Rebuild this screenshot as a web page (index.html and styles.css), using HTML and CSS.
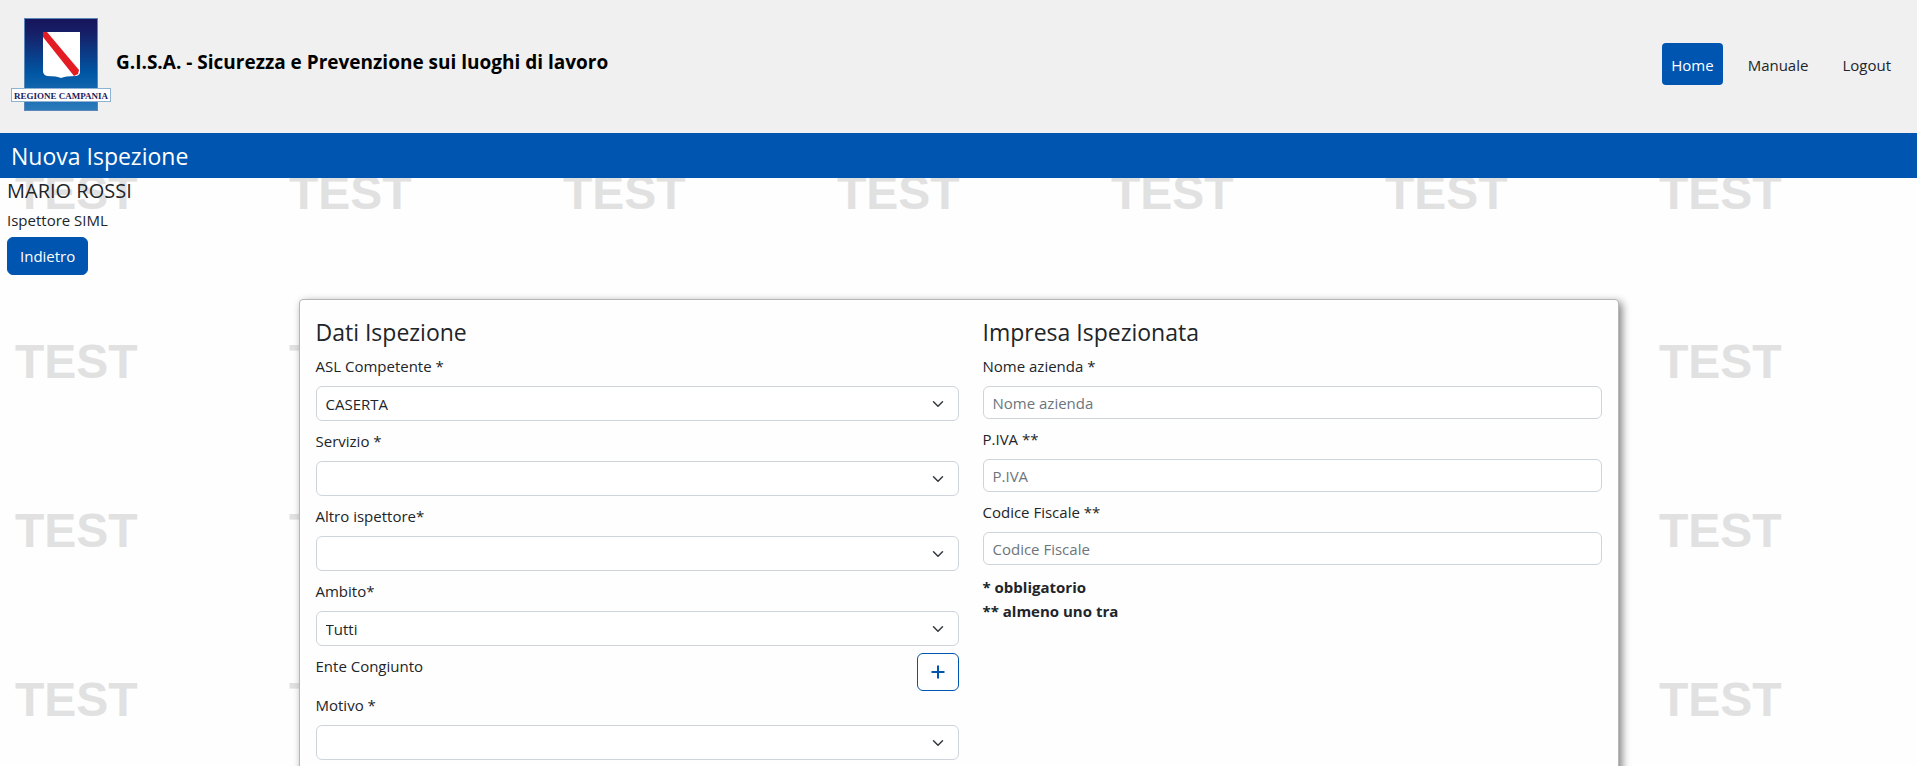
FILE: index.html
```html
<!DOCTYPE html>
<html lang="it">
<head>
<meta charset="utf-8">
<meta name="viewport" content="width=device-width, initial-scale=1">
<title>G.I.S.A. - Nuova Ispezione</title>
<link rel="stylesheet" href="styles.css">
</head>
<body>
<div class="watermark" aria-hidden="true">
  <span>TEST</span><span>TEST</span><span>TEST</span><span>TEST</span><span>TEST</span><span>TEST</span><span>TEST</span>
  <span>TEST</span><span>TEST</span><span>TEST</span><span>TEST</span><span>TEST</span><span>TEST</span><span>TEST</span>
  <span>TEST</span><span>TEST</span><span>TEST</span><span>TEST</span><span>TEST</span><span>TEST</span><span>TEST</span>
  <span>TEST</span><span>TEST</span><span>TEST</span><span>TEST</span><span>TEST</span><span>TEST</span><span>TEST</span>
</div>

<header class="header">
  <svg class="logo" width="100" height="94" viewBox="0 0 100 94" role="img" aria-label="Regione Campania">
    <defs>
      <linearGradient id="sky" x1="0" y1="0" x2="0" y2="1">
        <stop offset="0" stop-color="#16145c"/>
        <stop offset="0.15" stop-color="#171e66"/>
        <stop offset="0.6" stop-color="#0057a4"/>
        <stop offset="1" stop-color="#2b7bbb"/>
      </linearGradient>
    </defs>
    <rect x="13.5" y="0.5" width="73" height="92" fill="url(#sky)" stroke="#5a87b8"/>
    <path d="M32 14h37v40q0 3-4 4-11 0-15 2-4-2-14-2-4-1-4-5z" fill="#fff"/>
    <path d="M32 14h4l32 38-1 4-4 2L32 19z" fill="#e31b23"/>
    <rect x="0.5" y="70.5" width="99" height="13" fill="#fff" stroke="#8fb2d3"/>
    <text x="50" y="81" text-anchor="middle" class="logo-text">REGIONE CAMPANIA</text>
  </svg>
  <h1 class="app-title">G.I.S.A. - Sicurezza e Prevenzione sui luoghi di lavoro</h1>
  <nav class="nav">
    <a class="nav-link active" href="#">Home</a>
    <a class="nav-link" href="#">Manuale</a>
    <a class="nav-link" href="#">Logout</a>
  </nav>
</header>

<h2 class="page-bar">Nuova Ispezione</h2>

<section class="user">
  <div class="user-name">MARIO ROSSI</div>
  <div class="user-role">Ispettore SIML</div>
  <button class="btn btn-primary" type="button">Indietro</button>
</section>

<main class="card">
  <form class="columns">
    <section>
      <h3 class="section-title">Dati Ispezione</h3>
      <div class="field">
        <label for="asl">ASL Competente *</label>
        <div class="select-box">
          <select id="asl"><option>CASERTA</option></select>
          <svg class="chevron" viewBox="0 0 16 16"><path d="m2 5 6 6 6-6"/></svg>
        </div>
      </div>
      <div class="field">
        <label for="servizio">Servizio *</label>
        <div class="select-box">
          <select id="servizio"><option></option></select>
          <svg class="chevron" viewBox="0 0 16 16"><path d="m2 5 6 6 6-6"/></svg>
        </div>
      </div>
      <div class="field">
        <label for="ispettore">Altro ispettore*</label>
        <div class="select-box">
          <select id="ispettore"><option></option></select>
          <svg class="chevron" viewBox="0 0 16 16"><path d="m2 5 6 6 6-6"/></svg>
        </div>
      </div>
      <div class="field">
        <label for="ambito">Ambito*</label>
        <div class="select-box">
          <select id="ambito"><option>Tutti</option></select>
          <svg class="chevron" viewBox="0 0 16 16"><path d="m2 5 6 6 6-6"/></svg>
        </div>
      </div>
      <div class="add-row">
        <label for="ente">Ente Congiunto</label>
        <button class="btn btn-outline" id="ente" type="button">
          <svg class="plus" viewBox="0 0 16 16"><path d="M8 1.500v13M1.500 8h13"/></svg>
        </button>
      </div>
      <div class="field">
        <label for="motivo">Motivo *</label>
        <div class="select-box">
          <select id="motivo"><option></option></select>
          <svg class="chevron" viewBox="0 0 16 16"><path d="m2 5 6 6 6-6"/></svg>
        </div>
      </div>
    </section>

    <section>
      <h3 class="section-title">Impresa Ispezionata</h3>
      <div class="field">
        <label for="nome">Nome azienda *</label>
        <input id="nome" type="text" placeholder="Nome azienda">
      </div>
      <div class="field">
        <label for="piva">P.IVA **</label>
        <input id="piva" type="text" placeholder="P.IVA">
      </div>
      <div class="field">
        <label for="cf">Codice Fiscale **</label>
        <input id="cf" type="text" placeholder="Codice Fiscale">
      </div>
      <p class="note">* obbligatorio<br>** almeno uno tra</p>
    </section>
  </form>
</main>
</body>
</html>
```

FILE: styles.css
```css
* {
  box-sizing: border-box;
}

body {
  position: relative;
  height: 100vh;
  margin: 0;
  overflow: hidden;
  background: #fefefe;
  color: #212529;
  font: 15px/24px "Open Sans", "Noto Sans", sans-serif;
}

h1, h2, h3, p {
  margin: 0;
}

/* Repeated environment mark behind the page */
.watermark {
  position: absolute;
  inset: 0;
  z-index: -1;
  display: grid;
  grid-template-columns: repeat(7, 274px);
  grid-auto-rows: 169px;
  padding: 165px 0 0 15px;
  overflow: hidden;
  color: #e1e1e1;
  font: bold 48px/56px "Liberation Sans", Arial, sans-serif;
}

.header {
  display: flex;
  align-items: center;
  height: 133px;
  padding: 0 17px 0 11px;
  background: #f0f0f0;
}

.logo {
  flex: none;
  margin-bottom: 4px;
}

.logo-text {
  fill: #1c1a5e;
  font: bold 9px "Liberation Serif", serif;
}

.app-title {
  margin: 0 auto 10px 5px;
  color: #000;
  font-size: 19px;
  font-weight: 700;
  line-height: 28px;
}

.nav {
  display: flex;
  gap: 16px;
  margin-top: -5px;
}

.nav-link {
  padding: 10px 9px 8px;
  border-radius: 4px;
  color: #212529;
  text-decoration: none;
}

.nav-link.active {
  background: #0055b0;
  color: #fff;
}

.page-bar {
  padding: 7px 11px 6px;
  background: #0055b0;
  color: #fff;
  font-size: 23px;
  font-weight: 400;
  line-height: 32px;
}

.user {
  padding: 0 7px;
}

.user-name {
  font-size: 20px;
  line-height: 26px;
}

.user-role {
  padding: 4px 0 5px;
}

.btn {
  display: block;
  height: 38px;
  padding: 0 12px;
  border: 1px solid #0055b0;
  border-radius: 6px;
  font: inherit;
}

.btn-primary {
  background: #0055b0;
  color: #fff;
}

.btn-outline {
  background: #fff;
  color: #0055b0;
}

.card {
  max-width: 1320px;
  margin: 24px auto 0;
  padding: 17px 16px;
  border: 1px solid #b7b7b7;
  border-radius: 4px;
  background: #fefefe;
  box-shadow: 3px 3px 8px #808080;
}

.columns {
  display: grid;
  grid-template-columns: 643fr 619fr;
  gap: 24px;
}

.section-title {
  margin-bottom: 7px;
  font-size: 23px;
  font-weight: 400;
  line-height: 30px;
}

.field {
  display: grid;
  gap: 8px;
  margin-bottom: 8px;
}

.select-box {
  display: grid;
  align-items: center;
}

.select-box select,
.chevron {
  grid-area: 1 / 1;
}

input,
select {
  width: 100%;
  height: 33px;
  padding: 0 9px;
  border: 1px solid #ced4da;
  border-radius: 6px;
  background: #fff;
  color: #212529;
  font: inherit;
}

select {
  height: 35px;
  appearance: none;
}

input::placeholder {
  color: #6c757d;
  opacity: 1;
}

.chevron {
  justify-self: end;
  width: 12px;
  height: 12px;
  margin-right: 15px;
  fill: none;
  stroke: #343a40;
  stroke-width: 2;
  stroke-linecap: round;
  stroke-linejoin: round;
  pointer-events: none;
}

.add-row {
  display: flex;
  justify-content: space-between;
  align-items: flex-start;
  margin-bottom: 2px;
}

.add-row .btn {
  margin-top: -1px;
}

.plus {
  display: block;
  width: 16px;
  height: 16px;
  fill: none;
  stroke: currentColor;
  stroke-width: 2;
}

.note {
  padding-top: 2px;
  font-weight: 700;
}
```
